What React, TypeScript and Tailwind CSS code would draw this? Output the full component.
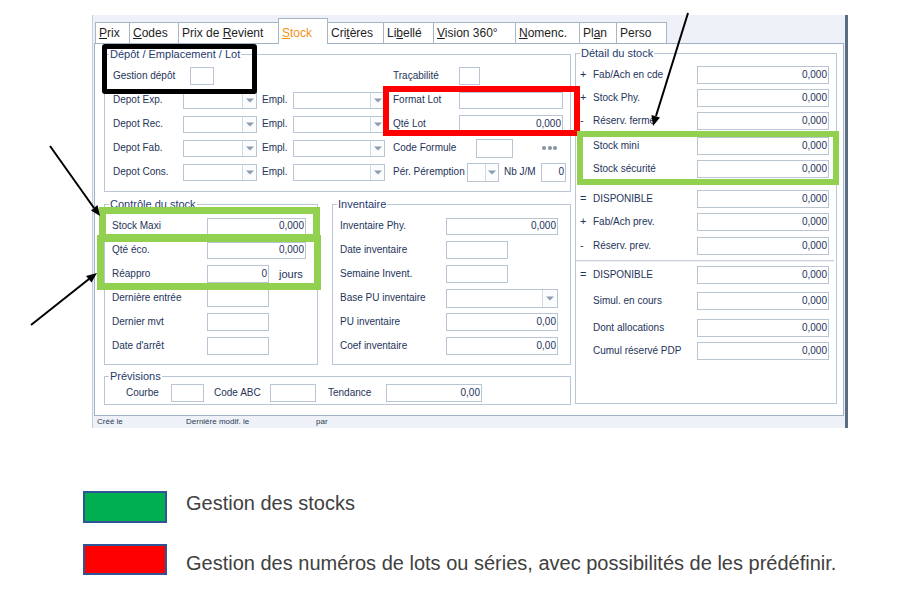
import React from "react";

const LBL = "shrink-0 whitespace-nowrap text-[10px] leading-[12px] text-[#24345a]";

function Field({ className = "", value = "" }: { className?: string; value?: string }) {
  return (
    <div
      className={`flex shrink-0 items-center justify-end border border-[#b9c5d3] bg-white pr-[1px] text-[10px] leading-none text-[#24345a] ${className}`}
    >
      {value}
    </div>
  );
}

function Combo({ className = "", btn = "w-[14px]" }: { className?: string; btn?: string }) {
  return (
    <div className={`flex shrink-0 border border-[#b9c5d3] bg-white ${className}`}>
      <div className="flex-1" />
      <div className={`flex items-center justify-center border-l border-[#d3dbe4] bg-[#fbfcfd] ${btn}`}>
        <svg width="8" height="5" viewBox="0 0 8 5">
          <path d="M0 0.5h8L4 4.5z" fill="#8d9db1" />
        </svg>
      </div>
    </div>
  );
}

function Group({ title, className = "", children }: { title: string; className?: string; children?: React.ReactNode }) {
  return (
    <fieldset className={`min-w-0 shrink-0 border border-[#b8c6d5] ${className}`}>
      <legend className="ml-[4px] px-[1px] text-[11px] leading-[14px] text-[#1f3a6e]">{title}</legend>
      {children}
    </fieldset>
  );
}

const tabs = [
  { t: "Prix", u: 0, w: "w-[35px]" },
  { t: "Codes", u: 0, w: "w-[50px]" },
  { t: "Prix de Revient", u: 8, w: "w-[101px]" },
  { t: "Stock", u: 0, w: "w-[50px]", on: true },
  { t: "Critères", u: 3, w: "w-[57px]" },
  { t: "Libellé", u: 2, w: "w-[51px]" },
  { t: "Vision 360°", u: 0, w: "w-[83px]" },
  { t: "Nomenc.", u: 0, w: "w-[65px]" },
  { t: "Plan", u: 2, w: "w-[38px]" },
  { t: "Perso", u: -1, w: "w-[51px]" },
];

function TabLabel({ t, u }: { t: string; u: number }) {
  if (u < 0) return <>{t}</>;
  return (
    <>
      {t.slice(0, u)}
      <span className="underline decoration-1 underline-offset-[1px]">{t[u]}</span>
      {t.slice(u + 1)}
    </>
  );
}

function DRow({ sign = "", label, className = "" }: { sign?: string; label: string; className?: string }) {
  return (
    <div className={`flex h-[23px] items-center pl-[4px] ${className}`}>
      <span className="w-[13px] shrink-0 text-[11px] leading-none text-[#24345a]">{sign}</span>
      <span className={`${LBL} w-[104px]`}>{label}</span>
      <Field className="h-[18px] w-[132px]" value="0,000" />
    </div>
  );
}

function Row({ label, w, children }: { label: string; w: string; children?: React.ReactNode }) {
  return (
    <div className="flex h-[24px] items-center">
      <span className={`${LBL} ${w}`}>{label}</span>
      {children}
    </div>
  );
}

export default function App() {
  return (
    <div className="relative h-[615px] w-[914px] overflow-hidden bg-white font-['Liberation_Sans',Arial,sans-serif]">
      {/* capture d'écran de la fiche */}
      <div className="ml-[92px] mt-[15px] flex h-[413px] w-[756px] flex-col border-l border-r-[3px] border-l-[#c5ced9] border-r-[#5b6d83] bg-[#eef2f8]">
        <div className="flex h-[28px] items-end pl-[2px]">
          {tabs.map((tb) =>
            tb.on ? (
              <div
                key={tb.t}
                className={`relative z-10 -mb-[1px] mr-[-1px] h-[26px] border-x border-t border-[#a7b6c7] bg-white pl-[3px] pt-[7px] text-[12px] leading-[14px] text-[#f39318] ${tb.w}`}
              >
                <TabLabel t={tb.t} u={tb.u} />
              </div>
            ) : (
              <div
                key={tb.t}
                className={`mr-[-1px] h-[21px] border-x border-t border-[#a7b6c7] bg-white pl-[3px] pt-[3px] text-[12px] leading-[14px] text-[#1e1e1e] ${tb.w}`}
              >
                <TabLabel t={tb.t} u={tb.u} />
              </div>
            )
          )}
        </div>

        <div className="ml-[1px] flex h-[373px] w-[750px] items-start gap-[4px] border border-[#9fb2c6] bg-white pl-[9px]">
          {/* colonne gauche */}
          <div className="mt-[3px] flex w-[467px] shrink-0 flex-col">
            <Group title="Dépôt / Emplacement / Lot" className="h-[145px] w-[467px]">
              <div className="flex flex-col pl-[8px] pt-[3px]">
                <div className="flex h-[24px] items-center">
                  <div className="flex w-[280px] items-center">
                    <span className={`${LBL} w-[77px]`}>Gestion dépôt</span>
                    <Field className="h-[18px] w-[24px]" />
                  </div>
                  <span className={`${LBL} w-[66px]`}>Traçabilité</span>
                  <Field className="h-[18px] w-[21px]" />
                </div>
                {[
                  ["Depot Exp.", "Format Lot"],
                  ["Depot Rec.", "Qté Lot"],
                  ["Depot Fab.", "Code Formule"],
                  ["Depot Cons.", "Pér. Péremption"],
                ].map(([l, r], i) => (
                  <div key={l} className="flex h-[24px] items-center">
                    <div className="flex w-[280px] items-center">
                      <span className={`${LBL} w-[70px]`}>{l}</span>
                      <Combo className="h-[17px] w-[74px]" />
                      <span className={`${LBL} ml-[5px] w-[31px]`}>Empl.</span>
                      <Combo className="h-[17px] w-[92px]" />
                    </div>
                    {i === 0 && (
                      <>
                        <span className={`${LBL} w-[66px]`}>{r}</span>
                        <Field className="h-[17px] w-[104px]" />
                      </>
                    )}
                    {i === 1 && (
                      <>
                        <span className={`${LBL} w-[66px]`}>{r}</span>
                        <Field className="h-[18px] w-[104px]" value="0,000" />
                      </>
                    )}
                    {i === 2 && (
                      <>
                        <span className={`${LBL} w-[83px]`}>{r}</span>
                        <Field className="h-[19px] w-[37px]" />
                        <div className="ml-[29px] flex gap-[1.5px]">
                          <span className="h-[4px] w-[4px] rounded-full bg-[#8593a3]" />
                          <span className="h-[4px] w-[4px] rounded-full bg-[#8593a3]" />
                          <span className="h-[4px] w-[4px] rounded-full bg-[#8593a3]" />
                        </div>
                      </>
                    )}
                    {i === 3 && (
                      <>
                        <span className={`${LBL} w-[74px]`}>{r}</span>
                        <Combo className="h-[19px] w-[32px]" btn="w-[13px]" />
                        <span className={`${LBL} ml-[5px] w-[37px]`}>Nb J/M</span>
                        <Field className="h-[19px] w-[25px]" value="0" />
                      </>
                    )}
                  </div>
                ))}
              </div>
            </Group>

            <div className="mt-[5px] flex gap-[14px]">
              <Group title="Contrôle du stock" className="h-[168px] w-[214px]">
                <div className="flex flex-col pl-[7px] pt-[3px]">
                  <Row label="Stock Maxi" w="w-[95px]">
                    <Field className="h-[17px] w-[99px]" value="0,000" />
                  </Row>
                  <Row label="Qté éco." w="w-[95px]">
                    <Field className="h-[17px] w-[99px]" value="0,000" />
                  </Row>
                  <Row label="Réappro" w="w-[95px]">
                    <Field className="h-[18px] w-[62px]" value="0" />
                    <span className="ml-[10px] text-[11px] leading-none text-[#24345a]">jours</span>
                  </Row>
                  <Row label="Dernière entrée" w="w-[95px]">
                    <Field className="h-[18px] w-[62px]" />
                  </Row>
                  <Row label="Dernier mvt" w="w-[95px]">
                    <Field className="h-[18px] w-[62px]" />
                  </Row>
                  <Row label="Date d'arrêt" w="w-[95px]">
                    <Field className="h-[18px] w-[62px]" />
                  </Row>
                </div>
              </Group>

              <Group title="Inventaire" className="h-[168px] w-[239px]">
                <div className="flex flex-col pl-[7px] pt-[3px]">
                  <Row label="Inventaire Phy." w="w-[106px]">
                    <Field className="h-[17px] w-[112px]" value="0,000" />
                  </Row>
                  <Row label="Date inventaire" w="w-[106px]">
                    <Field className="h-[18px] w-[62px]" />
                  </Row>
                  <Row label="Semaine Invent." w="w-[106px]">
                    <Field className="h-[18px] w-[62px]" />
                  </Row>
                  <Row label="Base PU inventaire" w="w-[106px]">
                    <Combo className="h-[19px] w-[112px]" btn="w-[15px]" />
                  </Row>
                  <Row label="PU inventaire" w="w-[106px]">
                    <Field className="h-[18px] w-[112px]" value="0,00" />
                  </Row>
                  <Row label="Coef inventaire" w="w-[106px]">
                    <Field className="h-[18px] w-[112px]" value="0,00" />
                  </Row>
                </div>
              </Group>
            </div>

            <Group title="Prévisions" className="mt-[4px] h-[36px] w-[467px]">
              <div className="flex h-[20px] items-center pl-[21px]">
                <span className={`${LBL} w-[45px]`}>Courbe</span>
                <Field className="h-[18px] w-[33px]" />
                <span className={`${LBL} ml-[10px] w-[56px]`}>Code ABC</span>
                <Field className="h-[18px] w-[46px]" />
                <span className={`${LBL} ml-[12px] w-[58px]`}>Tendance</span>
                <Field className="h-[18px] w-[96px]" value="0,00" />
              </div>
            </Group>
          </div>

          {/* colonne droite */}
          <Group title="Détail du stock" className="mt-[2px] h-[358px] w-[262px]">
            <div className="flex flex-col pt-[3px]">
              <DRow sign="+" label="Fab/Ach en cde" />
              <DRow sign="+" label="Stock Phy." />
              <DRow sign="-" label="Réserv. fermé" />
              <DRow label="Stock mini" className="mt-[2px]" />
              <DRow label="Stock sécurité" />
              <DRow sign="=" label="DISPONIBLE" className="mt-[7px]" />
              <DRow sign="+" label="Fab/Ach prev." />
              <DRow sign="-" label="Réserv.  prev." className="mt-[1px]" />
              <div className="mr-[2px] mt-[3px] h-[2px] border-t border-[#c9d0d8] bg-[#eef1f4]" />
              <DRow sign="=" label="DISPONIBLE" className="mt-[1px]" />
              <DRow label="Simul. en cours" className="mt-[3px]" />
              <DRow label="Dont allocations" className="mt-[4px]" />
              <DRow label="Cumul réservé PDP" />
            </div>
          </Group>
        </div>

        <div className="flex h-[12px] items-center pl-[4px] text-[8px] leading-none text-[#2b3a55]">
          <span className="w-[89px]">Créé le</span>
          <span className="w-[130px]">Dernière modif. le</span>
          <span>par</span>
        </div>
      </div>

      {/* légende */}
      <div className="ml-[83px] mt-[63px] flex flex-col gap-[21px]">
        <div className="flex items-center">
          <div className="h-[32px] w-[84px] border-2 border-[#2f5597] bg-[#00b050]" />
          <span className="-mt-[9px] ml-[19px] text-[20px] leading-none text-[#404040]">Gestion des stocks</span>
        </div>
        <div className="flex items-center">
          <div className="h-[31px] w-[84px] border-2 border-[#2f5597] bg-[#ff0000]" />
          <span className="mt-[7px] ml-[19px] text-[20px] leading-none text-[#404040]">
            Gestion des numéros de lots ou séries, avec possibilités de les prédéfinir.
          </span>
        </div>
      </div>

      {/* annotations */}
      <div className="absolute left-[102px] top-[44px] h-[50px] w-[155px] rounded-[3px] border-[5px] border-black" />
      <div className="absolute left-[383px] top-[86px] h-[50px] w-[197px] border-[6px] border-[#ff0000]" />
      <div className="absolute left-[577px] top-[131px] h-[54px] w-[262px] border-[6px] border-[#92d050]" />
      <div className="absolute left-[99px] top-[207px] h-[34px] w-[221px] border-[7px] border-[#92d050]" />
      <div className="absolute left-[97px] top-[235px] h-[55px] w-[224px] border-[7px] border-[#92d050]" />
      <svg className="pointer-events-none absolute left-0 top-0" width="914" height="615" viewBox="0 0 914 615">
        <g stroke="#000" strokeWidth="2">
          <line x1="688" y1="13" x2="656" y2="116" />
          <line x1="50" y1="146" x2="94" y2="208" />
          <line x1="31" y1="325" x2="89" y2="279" />
        </g>
        <g fill="#000">
          <polygon points="653,126 660,117.5 651.5,115" />
          <polygon points="100,216 91,210.5 97.5,205" />
          <polygon points="97,273 91.5,282.5 86,276" />
        </g>
      </svg>
    </div>
  );
}
